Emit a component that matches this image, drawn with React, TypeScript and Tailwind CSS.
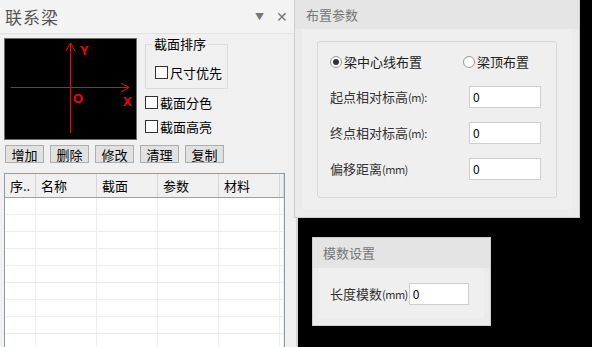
import { useState } from "react";

const cjk = { fontFamily: '"Noto Sans CJK SC", "Liberation Sans", sans-serif' };

const cols = [
  { name: "序..", w: "w-[31px]" },
  { name: "名称", w: "w-[61px]" },
  { name: "截面", w: "w-[61px]" },
  { name: "参数", w: "w-[61px]" },
  { name: "材料", w: "w-[61px]" },
];

const Box = ({ label, className = "" }: { label: string; className?: string }) => (
  <label className={`flex items-center gap-[2px] text-[13px] leading-none text-black ${className}`}>
    <span className="w-[13px] h-[13px] border border-[#333] bg-white" />
    {label}
  </label>
);

const Radio = ({ label, on }: { label: string; on?: boolean }) => (
  <label className="flex items-center gap-[2px] text-[13px] text-[#222]">
    <span className="w-[12px] h-[12px] rounded-full border border-[#999] bg-white flex items-center justify-center">
      {on && <span className="w-[6px] h-[6px] rounded-full bg-[#333]" />}
    </span>
    {label}
  </label>
);

// unit part of a label, narrower like the half-width glyphs in the reference
const Unit = ({ children }: { children: string }) => (
  <span className="text-[11px] tracking-[-0.5px]">{children}</span>
);

const Field = ({ label, unit }: { label: string; unit: string }) => (
  <div className="flex items-center justify-between h-[22px]">
    <span className="text-[13px] text-[#333]">
      {label}
      <Unit>{unit}</Unit>
    </span>
    <input
      defaultValue="0"
      className="w-[72px] h-[22px] border border-[#cfcfcf] bg-white px-[3px] text-[12px] text-[#000] outline-none"
    />
  </div>
);

const Axes = () => (
  <svg width="131" height="100" viewBox="0 0 131 100" className="block">
    <g stroke="#ff0000" strokeWidth="1" fill="none">
      <line x1="65.5" y1="4" x2="65.5" y2="94" />
      <polyline points="61,12 65.5,4 70,12" />
      <line x1="6" y1="48.5" x2="124" y2="48.5" />
      <polyline points="116,44 124,48.5 116,53" />
    </g>
    <g fill="#ff0000" fontFamily="Liberation Sans, sans-serif" fontWeight="bold" fontSize="13">
      <text x="75" y="16">Y</text>
      <text x="68" y="64">O</text>
      <text x="118" y="67">X</text>
    </g>
  </svg>
);

export default function App() {
  const [rows] = useState(Array.from({ length: 9 }));
  return (
    <div className="relative w-[592px] h-[347px] bg-black overflow-hidden" style={cjk}>
      {/* dock panel */}
      <div className="w-[298px] h-[347px] bg-[#f0f0f0] border-r-2 border-[#d6d6d6] flex flex-col">
        <div className="h-[34px] bg-[#f3f3f3] border-b border-[#e2e2e2] flex items-center pl-[5px] pr-[6px]">
          <span className="text-[17px] text-[#555] tracking-[1px]">联系梁</span>
          <span className="ml-auto text-[9px] text-[#777] mr-[12px]">▼</span>
          <span className="text-[14px] text-[#777] mr-[2px]">✕</span>
        </div>

        <div className="flex pl-[4px] pt-[4px] gap-[8px]">
          <div className="w-[133px] h-[102px] bg-black border border-[#6e6e6e]">
            <Axes />
          </div>
          <div className="flex flex-col pt-[1px]">
            <div className="relative w-[83px] h-[45px] border border-[#dcdcdc] mt-[5px]">
              <span className="absolute -top-[8px] left-[6px] bg-[#f0f0f0] px-[2px] text-[13px] leading-none text-black">
                截面排序
              </span>
              <div className="pl-[9px] pt-[21px]">
                <Box label="尺寸优先" />
              </div>
            </div>
            <Box label="截面分色" className="mt-[7px]" />
            <Box label="截面高亮" className="mt-[11px]" />
          </div>
        </div>

        <div className="flex gap-[6px] pl-[5px] mt-[5px]">
          {["增加", "删除", "修改", "清理", "复制"].map((b) => (
            <button
              key={b}
              className="w-[39px] h-[18px] bg-[#e1e1e1] border border-[#adadad] text-[13px] leading-none text-black"
            >
              {b}
            </button>
          ))}
        </div>

        <div className="ml-[4px] mt-[10px] w-[281px] flex-1 border border-[#8f9aa3] border-b-0 bg-white overflow-hidden">
          <div className="flex h-[24px] bg-[#f0f0f0] border-b border-[#a0a0a0]">
            {cols.map((c) => (
              <div key={c.name} className={`${c.w} border-r border-[#d5d5d5] pl-[5px] flex items-center text-[13px] text-black`}>
                {c.name}
              </div>
            ))}
            <div className="w-[4px] border-r border-[#d5d5d5]" />
          </div>
          {rows.map((_, i) => (
            <div key={i} className="flex h-[17px] border-b border-[#ececec]">
              {cols.map((c) => (
                <div key={c.name} className={`${c.w} border-r border-[#ececec]`} />
              ))}
              <div className="w-[4px] border-r border-[#ececec]" />
            </div>
          ))}
        </div>
      </div>

      {/* floating window: layout params */}
      <div className="absolute left-[294px] top-0 w-[286px] h-[218px] bg-[#ebebeb] border-l border-r border-b border-[#cdcdcd] flex flex-col">
        <div className="h-[29px] bg-[#e5e5e5] pl-[11px] flex items-center text-[13px] text-[#777]">布置参数</div>
        <div className="mx-[7px] flex-1 mb-[8px] bg-[#efefef] px-[15px] pt-[12px]">
          <div className="h-[157px] border border-[#d8d8d8] rounded-[3px] pl-[12px] pr-[15px] pt-[10px] flex flex-col gap-[14px]">
            <div className="flex justify-between pr-[12px]">
              <Radio label="梁中心线布置" on />
              <Radio label="梁顶布置" />
            </div>
            <Field label="起点相对标高" unit="(m):" />
            <Field label="终点相对标高" unit="(m):" />
            <Field label="偏移距离" unit="(mm)" />
          </div>
        </div>
      </div>

      {/* floating window: modulus */}
      <div className="absolute left-[312px] top-[237px] w-[179px] h-[89px] bg-[#ebebeb] border border-[#cdcdcd] flex flex-col">
        <div className="h-[30px] bg-[#e4e4e4] pl-[10px] flex items-center text-[13px] text-[#777]">模数设置</div>
        <div className="mx-[6px] mb-[6px] flex-1 bg-[#efefef] flex items-center pl-[11px] gap-[1px]">
          <span className="text-[13px] text-[#333]">
            长度模数<Unit>(mm)</Unit>
          </span>
          <input
            defaultValue="0"
            className="w-[60px] h-[22px] border border-[#cfcfcf] bg-white px-[3px] text-[12px] outline-none"
          />
        </div>
      </div>
    </div>
  );
}
